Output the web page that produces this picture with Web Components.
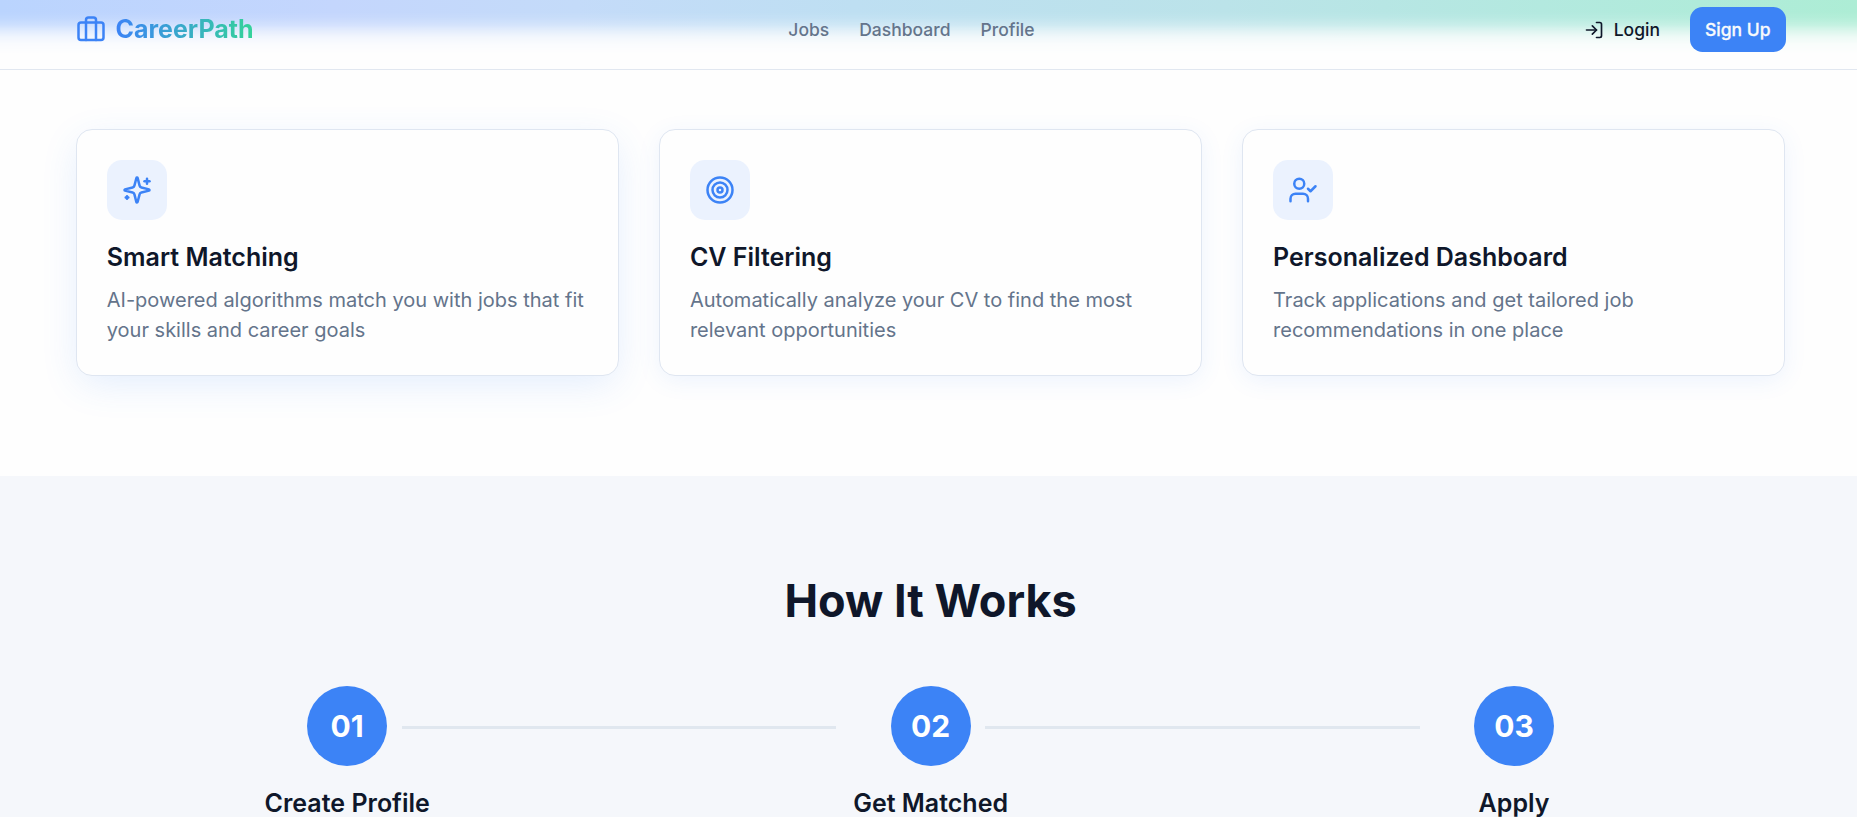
<!DOCTYPE html>
<html lang="en">
<head>
<meta charset="utf-8">
<title>CareerPath</title>
<style>
html,body{margin:0;height:817px;overflow:hidden}
body{background:#fefefe;font-family:Inter,sans-serif;color:#0f172a;font-size:20px;line-height:30px}
</style>
</head>
<body>
<career-page></career-page>
<script>
const ICONS={
 luggage:'<path d="M16 20V4a2 2 0 0 0-2-2h-4a2 2 0 0 0-2 2v16"/><rect width="20" height="14" x="2" y="6" rx="2"/>',
 login:'<path d="M15 3h4a2 2 0 0 1 2 2v14a2 2 0 0 1-2 2h-4"/><path d="m10 17 5-5-5-5"/><path d="M15 12H3"/>',
 sparkles:'<path d="M9.937 15.5A2 2 0 0 0 8.5 14.063l-6.135-1.582a.5.5 0 0 1 0-.962L8.5 9.936A2 2 0 0 0 9.937 8.5l1.582-6.135a.5.5 0 0 1 .963 0L14.063 8.5A2 2 0 0 0 15.5 9.937l6.135 1.581a.5.5 0 0 1 0 .964L15.5 14.063a2 2 0 0 0-1.437 1.437l-1.582 6.135a.5.5 0 0 1-.963 0z"/><path d="M20 3v4"/><path d="M22 5h-4"/><path d="M4 17v2"/><path d="M5 18H3"/>',
 target:'<circle cx="12" cy="12" r="10"/><circle cx="12" cy="12" r="6"/><circle cx="12" cy="12" r="2"/>',
 usercheck:'<path d="M16 21v-2a4 4 0 0 0-4-4H6a4 4 0 0 0-4 4v2"/><circle cx="9" cy="7" r="4"/><path d="m16 11 2 2 4-4"/>'
};
function define(name,render){
  customElements.define(name,class extends HTMLElement{
    connectedCallback(){ if(!this.shadowRoot) this.attachShadow({mode:'open'}).innerHTML=render(this); }
  });
}
define('line-icon',el=>`<style>:host{display:block;flex:none}svg{display:block}</style>
<svg width="${el.getAttribute('size')}" height="${el.getAttribute('size')}" viewBox="0 0 24 24" fill="none" stroke="currentColor" stroke-width="2" stroke-linecap="round" stroke-linejoin="round">${ICONS[el.getAttribute('name')]}</svg>`);
define('nav-bar',()=>`<style>
:host{display:flex;box-sizing:border-box;height:70px;border-bottom:1px solid #e1e7f0;padding:0 71px 10px 76px;align-items:center;justify-content:space-between;font-size:17.5px;font-weight:500;position:relative;isolation:isolate}
:host::before{content:"";position:absolute;inset:0 0 9px;z-index:-1;background:linear-gradient(90deg,#bad4fe 0,#c4d6fd 18%,#c4dbf9 31%,#bedff2 46%,#bbe3e9 66%,#b3e9df 83%,#adedd5 100%);
-webkit-mask-image:linear-gradient(#000 0,#000 12px,rgba(0,0,0,.92) 18px,rgba(0,0,0,.72) 25px,rgba(0,0,0,.42) 31px,rgba(0,0,0,.2) 37px,rgba(0,0,0,.07) 44px,transparent 54px)}
.brand,.login,nav,.right{display:flex;align-items:center}
.brand{gap:9.5px;color:#3c83f6;font-size:25px;font-weight:700}
.brand span{margin-top:-2px;background:linear-gradient(90deg,#3c83f6,#34d399);-webkit-background-clip:text;background-clip:text;color:transparent}
nav{gap:30px;color:#64748b;margin-left:-15px}
.right{gap:30.5px}.login{gap:9.5px}
.button{background:#3c83f6;color:#f8fafc;border-radius:12.5px;height:45px;padding:0 15.5px 0 14.5px;display:flex;align-items:center;-webkit-text-stroke:.3px #f8fafc}
</style>
<div class="brand"><line-icon name="luggage" size="30"></line-icon><span>CareerPath</span></div>
<nav><span>Jobs</span><span>Dashboard</span><span>Profile</span></nav>
<div class="right"><div class="login"><line-icon name="login" size="20"></line-icon><span>Login</span></div><div class="button">Sign Up</div></div>`);
define('feature-card',el=>`<style>
:host{display:block;box-sizing:border-box;height:247px;border:1px solid #dfe6f1;border-radius:16px;padding:30px;background:#fefefe;box-shadow:0 5px 25px -2px rgba(60,131,246,.1)}
:host([raised]){box-shadow:0 10px 38px -4px rgba(60,131,246,.15)}
.icon{width:60px;height:60px;border-radius:15px;background:#ebf2fe;color:#3c83f6;display:grid;place-items:center}
h3{margin:20px 0 10px;font-size:25px;line-height:35px;font-weight:600}
p{margin:0;color:#64748b}
</style><div class="icon"><line-icon name="${el.getAttribute('icon')}" size="30"></line-icon></div>
<h3><slot name="title"></slot></h3><p><slot></slot></p>`);
define('process-step',el=>`<style>
:host{display:flex;flex-direction:column;align-items:center;position:relative}
.number{width:80px;height:80px;border-radius:50%;background:#3c83f6;color:#fff;font-size:30px;font-weight:700;display:grid;place-items:center}
h3{margin:20px 0 0;font-size:25px;line-height:35px;font-weight:600}
:host([linked])::after{content:"";position:absolute;left:60%;width:80%;top:40px;height:3px;background:#e0e7ef}
</style><div class="number">${el.getAttribute('number')}</div><h3><slot></slot></h3>`);
define('career-page',()=>`<style>
:host{display:block}
.row{display:grid;grid-template-columns:repeat(3,minmax(0,1fr));gap:40px}
.features{padding:59px 71.75px 100px 75.75px}
.how{background:#f5f7fb;height:341px;box-sizing:border-box;padding:100px 71.25px 0 75.5px}
h2{margin:0 0 60px;text-align:center;font-size:45px;line-height:50px;font-weight:700}
</style>
<nav-bar></nav-bar>
<section class="features"><div class="row">
<feature-card icon="sparkles" raised><span slot="title">Smart Matching</span>AI-powered algorithms match you with jobs that fit your skills and career goals</feature-card>
<feature-card icon="target"><span slot="title">CV Filtering</span>Automatically analyze your CV to find the most relevant opportunities</feature-card>
<feature-card icon="usercheck"><span slot="title">Personalized Dashboard</span>Track applications and get tailored job recommendations in one place</feature-card>
</div></section>
<section class="how"><h2>How It Works</h2><div class="row">
<process-step number="01" linked>Create Profile</process-step>
<process-step number="02" linked>Get Matched</process-step>
<process-step number="03">Apply</process-step>
</div></section>`);
</script>
</body>
</html>
